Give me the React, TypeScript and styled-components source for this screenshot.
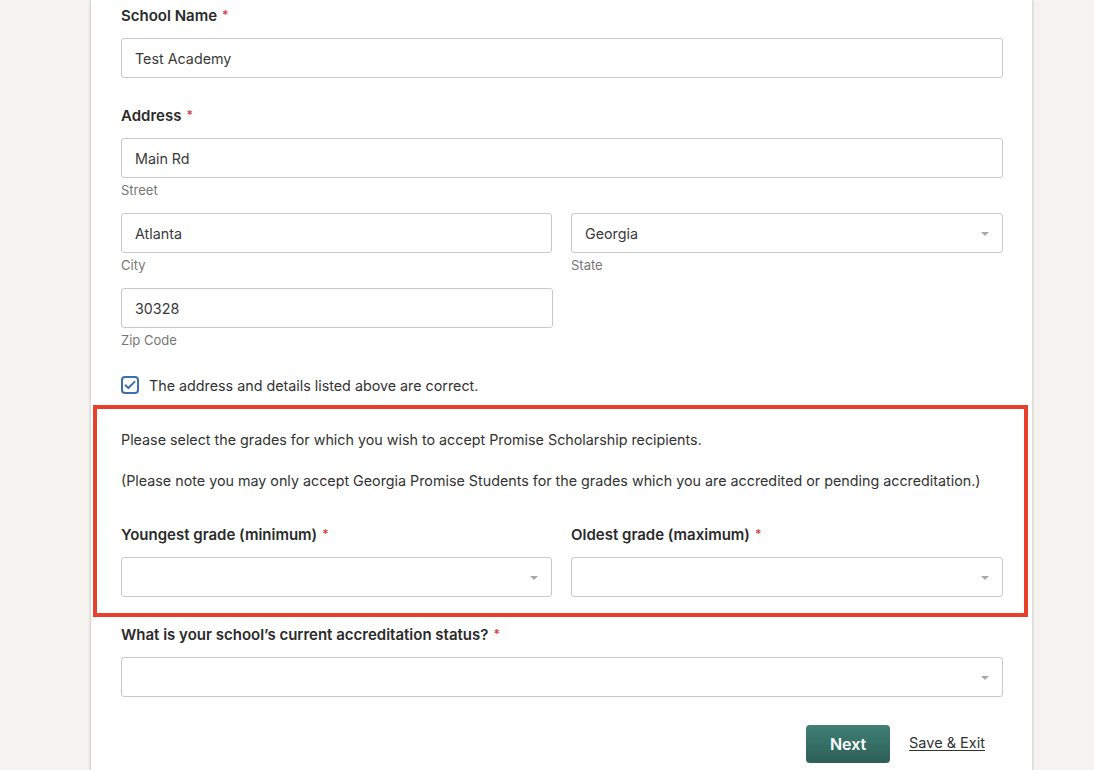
import styled, { createGlobalStyle } from "styled-components";

const GlobalStyle = createGlobalStyle`
  body {
    margin: 0;
    background: #f4f3ef;
    font-family: Inter, "Liberation Sans", Arial, sans-serif;
    color: #333;
  }
`;

const Page = styled.div`
  display: flex;
  min-height: 770px;
  overflow: hidden;
`;

const Card = styled.main`
  width: 941px;
  margin-left: 91px;
  background: #fff;
  box-shadow: 0 0 3px rgba(0, 0, 0, 0.28);
  padding: 5px 29px 40px 30px;
  box-sizing: border-box;
`;

const Label = styled.div<{ $gap?: number }>`
  font-size: 15px;
  line-height: 22px;
  height: 20px;
  font-weight: 600;
  color: #2b2b2b;
  margin-top: ${(p) => p.$gap ?? 0}px;
  margin-bottom: 13px;
`;

const Req = styled.span`
  color: #d64541;
  font-size: 12px;
  margin-left: 5px;
  position: relative;
  top: -2px;
`;

const Input = styled.div`
  position: relative;
  height: 40px;
  box-sizing: border-box;
  border: 1px solid #c9c9c9;
  border-radius: 3px;
  padding: 0 13px;
  display: flex;
  align-items: center;
  font-size: 14.3px;
  color: #3a3a3a;
  background: #fff;
`;

const Arrow = styled.span`
  position: absolute;
  right: 13px;
  top: 18px;
  width: 0;
  height: 0;
  border-left: 4.5px solid transparent;
  border-right: 4.5px solid transparent;
  border-top: 4px solid #a9a9a9;
`;

const Helper = styled.div`
  font-size: 13px;
  line-height: 16px;
  color: #777;
  margin-top: 4px;
`;

const Row = styled.div<{ $gap?: number }>`
  display: grid;
  grid-template-columns: 431px 432px;
  column-gap: 19px;
  margin-top: ${(p) => p.$gap ?? 0}px;
`;

const Half = styled.div`
  width: 432px;
  margin-top: 15px;
`;

const CheckRow = styled.label`
  display: flex;
  align-items: center;
  gap: 10px;
  margin-top: 27px;
  height: 20px;
  font-size: 14.3px;
  color: #333;
`;

const CheckBox = styled.span`
  width: 18px;
  height: 18px;
  box-sizing: border-box;
  border: 2px solid #3c6fad;
  border-radius: 4px;
  display: flex;
  align-items: center;
  justify-content: center;
`;

const Highlight = styled.section`
  margin: 10px -25px 0 -28px;
  border: 4px solid #e8412b;
  padding: 21px 21px 16px 24px;
`;

const Text = styled.p<{ $gap?: number }>`
  margin: ${(p) => p.$gap ?? 0}px 0 0;
  font-size: 14.3px;
  line-height: 20px;
  color: #333;
`;

const Actions = styled.div`
  display: flex;
  justify-content: flex-end;
  align-items: center;
  gap: 19px;
  margin-top: 28px;
  padding-right: 18px;
`;

const NextButton = styled.button`
  width: 84px;
  height: 38px;
  border: none;
  border-radius: 4px;
  background: linear-gradient(#3f7f75, #2c5f56);
  color: #fff;
  font-family: inherit;
  font-size: 16px;
  font-weight: 600;
`;

const LinkButton = styled.a`
  font-size: 14.5px;
  color: #333;
  text-decoration: underline;
  text-underline-offset: 2px;
  margin-top: -3px;
`;

const Select = ({ value }: { value?: string }) => (
  <Input>
    {value}
    <Arrow />
  </Input>
);

export default function App() {
  return (
    <>
      <GlobalStyle />
      <Page>
        <Card>
          <Label>
            School Name<Req>*</Req>
          </Label>
          <Input>Test Academy</Input>

          <Label $gap={27}>
            Address<Req>*</Req>
          </Label>
          <Input>Main Rd</Input>
          <Helper>Street</Helper>

          <Row $gap={15}>
            <div>
              <Input>Atlanta</Input>
              <Helper>City</Helper>
            </div>
            <div>
              <Select value="Georgia" />
              <Helper>State</Helper>
            </div>
          </Row>

          <Half>
            <Input>30328</Input>
            <Helper>Zip Code</Helper>
          </Half>

          <CheckRow>
            <CheckBox>
              <svg width="12" height="10" viewBox="0 0 12 10" fill="none">
                <path
                  d="M1.5 5.2 4.4 8 10.5 1.8"
                  stroke="#3c6fad"
                  strokeWidth="1.9"
                  strokeLinecap="round"
                  strokeLinejoin="round"
                />
              </svg>
            </CheckBox>
            The address and details listed above are correct.
          </CheckRow>

          <Highlight>
            <Text>
              Please select the grades for which you wish to accept Promise
              Scholarship recipients.
            </Text>
            <Text $gap={21}>
              (Please note you may only accept Georgia Promise Students for the
              grades which you are accredited or pending accreditation.)
            </Text>
            <Row $gap={33}>
              <div>
                <Label>
                  Youngest grade (minimum)<Req>*</Req>
                </Label>
                <Select />
              </div>
              <div>
                <Label>
                  Oldest grade (maximum)<Req>*</Req>
                </Label>
                <Select />
              </div>
            </Row>
          </Highlight>

          <Label $gap={7}>
            What is your school’s current accreditation status?<Req>*</Req>
          </Label>
          <Select />

          <Actions>
            <NextButton>Next</NextButton>
            <LinkButton>Save &amp; Exit</LinkButton>
          </Actions>
        </Card>
      </Page>
    </>
  );
}
